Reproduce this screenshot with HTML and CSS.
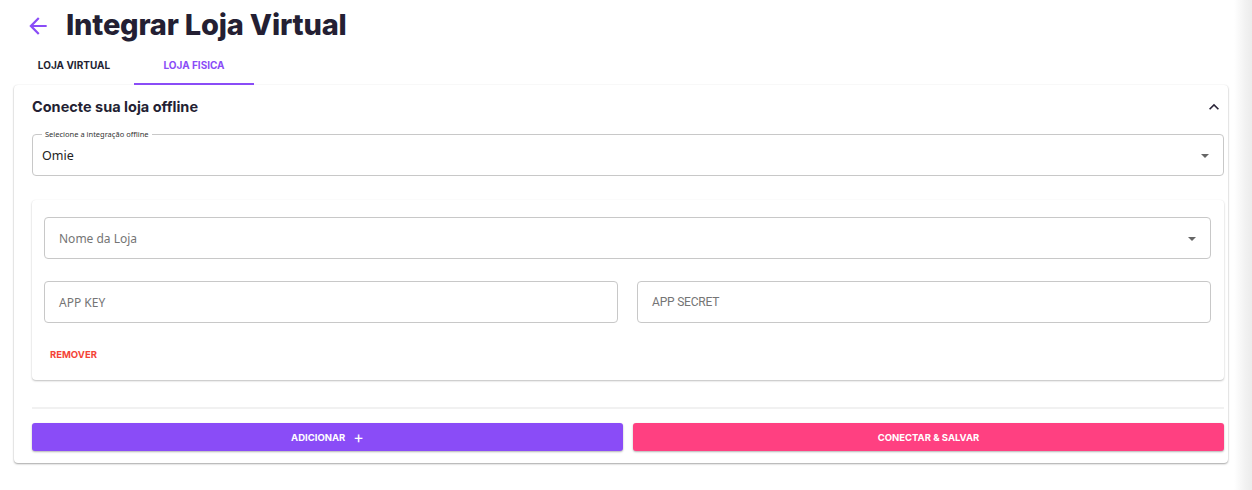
FILE: index.html
```html
<!DOCTYPE html>
<html lang="pt-BR">
<head>
<meta charset="utf-8">
<title>Integrar Loja Virtual</title>
<link rel="stylesheet" href="styles.css">
</head>
<body>
<div class="page">
  <header class="header">
    <button class="back" aria-label="Voltar">
      <svg width="26" height="26" viewBox="0 0 24 24"><path d="M20 11H7.83l5.59-5.59L12 4l-8 8 8 8 1.41-1.41L7.83 13H20v-2z" fill="#8a4cf7"/></svg>
    </button>
    <h1 class="title">Integrar Loja Virtual</h1>
  </header>
  <nav class="tabs">
    <div class="tab">LOJA VIRTUAL</div>
    <div class="tab active">LOJA FISICA</div>
  </nav>
  <section class="card">
    <div class="card-head">
      <h2 class="card-title">Conecte sua loja offline</h2>
      <svg class="chev" width="20" height="20" viewBox="0 0 24 24"><path d="M7.41 15.41 12 10.83l4.59 4.58L18 14l-6-6-6 6z" fill="#2a2438"/></svg>
    </div>
    <div class="field select filled">
      <span class="legend">Selecione a integração offline</span>
      <span class="value">Omie</span>
      <span class="caret"></span>
    </div>
    <div class="inner">
      <div class="field select">
        <span class="ph">Nome da Loja</span>
        <span class="caret"></span>
      </div>
      <div class="row">
        <div class="field"><span class="ph">APP KEY</span></div>
        <div class="field"><span class="ph cond">APP SECRET</span></div>
      </div>
      <button class="remove">REMOVER</button>
    </div>
    <hr class="divider">
    <div class="actions">
      <button class="btn add">ADICIONAR <span class="plus">+</span></button>
      <button class="btn save">CONECTAR &amp; SALVAR</button>
    </div>
  </section>
</div>
</body>
</html>
```

FILE: styles.css
```css
* { box-sizing: border-box; }
html, body { margin: 0; }
body {
  background: linear-gradient(to right, #fff 0, #fff 1234px, #f1f1f1 1246px, #ececec 1252px);
  font-family: "Noto Sans", "Open Sans", sans-serif;
  color: #2a2438;
  width: 1252px;
  height: 490px;
  overflow: hidden;
}
.page { padding: 0 24px 0 14px; }
.header {
  display: flex;
  align-items: center;
  height: 49px;
  padding-left: 11px;
}
.back {
  border: 0; background: none; padding: 0; margin: 0;
  width: 26px; height: 26px;
  display: flex; align-items: center; justify-content: center;
  margin-top: 2px;
}
.title {
  margin: 0 0 0 15px;
  font-family: "Inter", sans-serif;
  font-weight: 800;
  font-size: 29px;
  letter-spacing: -0.2px;
  color: #241f33;
}
.tabs { display: flex; height: 36px; }
.tab {
  width: 120px;
  display: flex; align-items: center; justify-content: center;
  font-family: "Inter", sans-serif;
  font-weight: 700;
  font-size: 10px;
  color: #241f33;
  padding-bottom: 4px;
}
.tab.active { color: #8a4cf7; border-bottom: 2px solid #8a4cf7; padding-bottom: 2px; }
.card {
  width: 1214px;
  background: #fff;
  border-radius: 4px;
  box-shadow: 0 1px 2px rgba(0,0,0,0.35), 0 0 2px rgba(0,0,0,0.06);
  padding: 0 4px 12px 18px;
}
.card-head {
  height: 49px;
  display: flex; align-items: center; justify-content: space-between;
}
.card-title {
  margin: 0; margin-top: -6px;
  font-family: "Inter", sans-serif;
  font-weight: 700;
  font-size: 14.5px;
  color: #241f33;
}
.chev { margin-top: -6px; }
.field {
  position: relative;
  height: 42px;
  border: 1px solid #c8c8c8;
  border-radius: 4px;
  display: flex; align-items: center;
  padding: 0 14px;
  background: #fff;
}
.field.filled { padding-left: 9px; }
.legend {
  position: absolute;
  left: 9px; top: -6px;
  padding: 0 3px;
  background: #fff;
  font-size: 7.5px;
  color: #333;
  line-height: 10px;
}
.value { font-size: 12.5px; color: #222; margin-top: 1px; }
.ph { font-size: 12px; color: #757575; }
.ph.cond { font-family: "Roboto", sans-serif; letter-spacing: -0.2px; }
.caret {
  position: absolute;
  right: 14px; top: 19px;
  width: 0; height: 0;
  border-left: 4px solid transparent;
  border-right: 4px solid transparent;
  border-top: 4px solid #666;
}
.inner {
  margin-top: 24px;
  border-radius: 4px;
  box-shadow: 0 1px 2px rgba(0,0,0,0.25), 0 0 1px rgba(0,0,0,0.06);
  padding: 17px 13px 16px 12px;
}
.row {
  display: grid;
  grid-template-columns: 1fr 1fr;
  gap: 19px;
  margin-top: 22px;
}
.remove {
  border: 0; background: none;
  margin-top: 22px;
  padding: 4px 6px;
  font-family: "Inter", sans-serif;
  font-weight: 700;
  font-size: 9.5px;
  color: #f44336;
}
.divider {
  border: 0;
  border-top: 2px solid #f1f1f1;
  margin: 27px 0 14px;
}
.actions {
  display: grid;
  grid-template-columns: 1fr 1fr;
  gap: 10px;
}
.btn {
  height: 28px;
  border: 0;
  border-radius: 3px;
  color: #fff;
  font-family: "Inter", sans-serif;
  font-weight: 700;
  font-size: 9.5px;
  box-shadow: 0 1px 2px rgba(0,0,0,0.3);
  display: flex; align-items: center; justify-content: center;
}
.add { background: #8a4cf7; }
.save { background: #ff4081; }
.plus { font-size: 16px; font-weight: 400; margin-left: 8px; line-height: 1; }
```
